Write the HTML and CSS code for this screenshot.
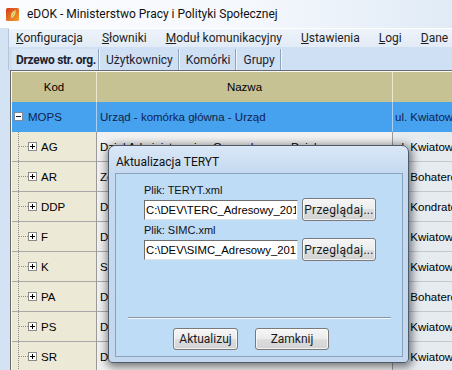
FILE: index.html
```html
<!DOCTYPE html>
<html lang="pl">
<head>
    <meta charset="UTF-8">
    <title>eDOK - Ministerstwo Pracy i Polityki Społecznej</title>
    <link rel="stylesheet" href="styles.css">
</head>
<body>
    <div class="titlebar">
        <svg class="app-icon" width="13" height="13" viewBox="0 0 13 13">
            <defs>
                <linearGradient id="iconGrad" x1="0" x2="1" y1="0" y2="1">
                    <stop offset="0" stop-color="#d53c1a"/>
                    <stop offset="1" stop-color="#f3a02c"/>
                </linearGradient>
            </defs>
            <rect width="13" height="13" rx="1.5" fill="url(#iconGrad)"/>
            <path d="M10 2.2 C6.4 2.8 4.2 5.8 5 10.4 C7.6 9.4 9.6 6.8 10 2.2 Z" fill="#f4e07e"/>
            <path d="M5 10.4 C6.2 7.6 7.6 5.4 10 2.2" stroke="#9bb84a" stroke-width="0.8" fill="none"/>
        </svg>
        <span class="title">eDOK - Ministerstwo Pracy i Polityki Społecznej</span>
    </div>

    <div class="frame">
        <div class="menubar">
            <span><u>K</u>onfiguracja</span>
            <span><u>S</u>łowniki</span>
            <span><u>M</u>oduł komunikacyjny</span>
            <span><u>U</u>stawienia</span>
            <span><u>L</u>ogi</span>
            <span><u>D</u>ane</span>
        </div>

        <div class="tabs">
            <div class="tab active">Drzewo str. org.</div>
            <div class="tab">Użytkownicy</div>
            <div class="tab">Komórki</div>
            <div class="tab">Grupy</div>
        </div>

        <div class="grid">
            <div class="row head">
                <div class="cell c1">Kod</div>
                <div class="cell c2">Nazwa</div>
                <div class="cell c3"></div>
            </div>
            <div class="row selected">
                <div class="cell c1 root">
                    <svg class="node" width="9" height="9" viewBox="0 0 9 9"><rect x=".5" y=".5" width="8" height="8" fill="#fff" stroke="#7d8a99"/><path d="M2 4.5h5" stroke="#0c1a3a"/></svg>
                    MOPS
                </div>
                <div class="cell c2">Urząd - komórka główna - Urząd</div>
                <div class="cell c3">ul. Kwiatowa 12</div>
            </div>
            <div class="row">
                <div class="cell c1"><span class="branch"></span><svg class="node" width="9" height="9" viewBox="0 0 9 9"><rect x=".5" y=".5" width="8" height="8" fill="#fff" stroke="#8a8a8a"/><path d="M2 4.5h5M4.5 2v5" stroke="#000"/></svg>AG</div>
                <div class="cell c2">Dział Administracyjno-Gospodarczy - Dział</div>
                <div class="cell c3">ul. Kwiatowa 12</div>
            </div>
            <div class="row">
                <div class="cell c1"><span class="branch"></span><svg class="node" width="9" height="9" viewBox="0 0 9 9"><rect x=".5" y=".5" width="8" height="8" fill="#fff" stroke="#8a8a8a"/><path d="M2 4.5h5M4.5 2v5" stroke="#000"/></svg>AR</div>
                <div class="cell c2">Zespół Radców Prawnych - Zespół</div>
                <div class="cell c3">ul. Bohaterów Warszawy 5</div>
            </div>
            <div class="row">
                <div class="cell c1"><span class="branch"></span><svg class="node" width="9" height="9" viewBox="0 0 9 9"><rect x=".5" y=".5" width="8" height="8" fill="#fff" stroke="#8a8a8a"/><path d="M2 4.5h5M4.5 2v5" stroke="#000"/></svg>DDP</div>
                <div class="cell c2">Dział Dodatków Pieniężnych - Dział</div>
                <div class="cell c3">ul. Kondratowicza 20</div>
            </div>
            <div class="row">
                <div class="cell c1"><span class="branch"></span><svg class="node" width="9" height="9" viewBox="0 0 9 9"><rect x=".5" y=".5" width="8" height="8" fill="#fff" stroke="#8a8a8a"/><path d="M2 4.5h5M4.5 2v5" stroke="#000"/></svg>F</div>
                <div class="cell c2">Dział Finansowo-Księgowy - Dział</div>
                <div class="cell c3">ul. Kwiatowa 12</div>
            </div>
            <div class="row">
                <div class="cell c1"><span class="branch"></span><svg class="node" width="9" height="9" viewBox="0 0 9 9"><rect x=".5" y=".5" width="8" height="8" fill="#fff" stroke="#8a8a8a"/><path d="M2 4.5h5M4.5 2v5" stroke="#000"/></svg>K</div>
                <div class="cell c2">Stanowisko ds. Kadr - Stanowisko</div>
                <div class="cell c3">ul. Kwiatowa 12</div>
            </div>
            <div class="row">
                <div class="cell c1"><span class="branch"></span><svg class="node" width="9" height="9" viewBox="0 0 9 9"><rect x=".5" y=".5" width="8" height="8" fill="#fff" stroke="#8a8a8a"/><path d="M2 4.5h5M4.5 2v5" stroke="#000"/></svg>PA</div>
                <div class="cell c2">Dział Pomocy Asystenckiej - Dział</div>
                <div class="cell c3">ul. Bohaterów Warszawy 5</div>
            </div>
            <div class="row">
                <div class="cell c1"><span class="branch"></span><svg class="node" width="9" height="9" viewBox="0 0 9 9"><rect x=".5" y=".5" width="8" height="8" fill="#fff" stroke="#8a8a8a"/><path d="M2 4.5h5M4.5 2v5" stroke="#000"/></svg>PS</div>
                <div class="cell c2">Dział Pracy Socjalnej - Dział</div>
                <div class="cell c3">ul. Kwiatowa 12</div>
            </div>
            <div class="row">
                <div class="cell c1"><span class="branch"></span><svg class="node" width="9" height="9" viewBox="0 0 9 9"><rect x=".5" y=".5" width="8" height="8" fill="#fff" stroke="#8a8a8a"/><path d="M2 4.5h5M4.5 2v5" stroke="#000"/></svg>SR</div>
                <div class="cell c2">Dział Świadczeń Rodzinnych - Dział</div>
                <div class="cell c3">ul. Kwiatowa 12</div>
            </div>
        </div>
    </div>

    <div class="dialog">
        <div class="dialog-title">Aktualizacja TERYT</div>
        <div class="dialog-client">
            <div class="fields">
                <div class="field-label">Plik: TERYT.xml</div>
                <div class="field-row">
                    <input class="path" type="text" value="C:\DEV\TERC_Adresowy_2018-01-02.xml" readonly>
                    <button class="btn browse">Przeglądaj...</button>
                </div>
                <div class="field-label">Plik: SIMC.xml</div>
                <div class="field-row">
                    <input class="path" type="text" value="C:\DEV\SIMC_Adresowy_2018-01-02.xml" readonly>
                    <button class="btn browse">Przeglądaj...</button>
                </div>
            </div>
            <div class="separator"></div>
            <div class="actions">
                <button class="btn update">Aktualizuj</button>
                <button class="btn close">Zamknij</button>
            </div>
        </div>
    </div>
</body>
</html>
```

FILE: styles.css
```css
* {
    box-sizing: border-box;
}
body {
    margin: 0;
    width: 452px;
    height: 370px;
    overflow: hidden;
    position: relative;
    background: #d4e3f3;
    font-family: Roboto, "Noto Sans", sans-serif;
    font-size: 12px;
    color: #1e1e1e;
}
.titlebar {
    height: 28px;
    display: flex;
    align-items: center;
    gap: 8px;
    padding-left: 6px;
    background: linear-gradient(to right, #fbfcfe 0%, #f5f8fc 55%, #e0ebf7 100%);
}
.app-icon {
    flex: none;
}
.title {
    color: #111;
}
.frame {
    padding-left: 8px;
}
.menubar {
    height: 19px;
    display: flex;
    align-items: center;
    gap: 19px;
    padding-left: 7px;
    background: linear-gradient(#eef3fa, #e2ebf6);
    border-top: 1px solid #ffffff;
    border-left: 1px solid #b6c6d9;
    white-space: nowrap;
}
.tabs {
    height: 23px;
    display: flex;
    align-items: flex-end;
    padding-left: 3px;
    background: #cfe0f4;
    border-left: 1px solid #b6c6d9;
}
.tab {
    height: 21px;
    line-height: 19px;
    padding: 2px 5px 0 7px;
    border-right: 1px solid #8ea4bd;
    box-shadow: 1px 0 0 #eef5fd;
    color: #1c2230;
    white-space: nowrap;
}
.tab.active {
    font-weight: 700;
    letter-spacing: -0.3px;
    padding: 2px 2px 0 4px;
    background: #d8e6f6;
}
.grid {
    margin-left: 2px;
    border-top: 1px solid #6b6b6b;
    border-left: 1px solid #6b6b6b;
    padding: 1px 0 0 1px;
    background: #f7f7f7;
    font-family: "Liberation Sans", Arial, sans-serif;
    font-size: 11.5px;
    color: #000;
}
.row {
    display: grid;
    grid-template-columns: 85px 296px 1fr;
    height: 30px;
}
.cell {
    display: flex;
    align-items: center;
    overflow: hidden;
    white-space: nowrap;
    border-right: 1px solid #9a9a9a;
    border-bottom: 1px solid #a8a8a8;
}
.c1 {
    background: #ece9d7;
}
.c2 {
    background: #f1f1f1;
    padding-left: 3px;
}
.c3 {
    background: #e6ebf0;
    padding-left: 2px;
    border-right: none;
    border-bottom-color: #c3c8cd;
}
.head .cell {
    background: #c7c294;
    justify-content: center;
    padding-left: 0;
    border-bottom: none;
    border-right-color: #ebe8d2;
}
.selected .cell {
    background: #46a1ef;
    color: #10234c;
    border-right-color: #a9d2f6;
    border-bottom-color: #46a1ef;
}
.root {
    padding-left: 2px;
    gap: 5px;
}
.branch {
    align-self: stretch;
    width: 10px;
    margin-left: 6px;
    border-left: 1px dotted #8c8c8c;
    display: flex;
    align-items: center;
}
.branch::after {
    content: "";
    width: 100%;
    border-top: 1px dotted #8c8c8c;
}
.node {
    flex: none;
    margin-right: 4px;
}
.root .node {
    margin-right: 0;
}

/* okno dialogowe */
.dialog {
    position: absolute;
    left: 108px;
    top: 145px;
    width: 301px;
    height: 218px;
    padding: 0 5px 5px 6px;
    border: 1px solid #4c5a69;
    border-radius: 7px 7px 4px 4px;
    background: linear-gradient(#dae8f7, #c5daf0 26px, #c3d8ee);
    box-shadow: 1px 2px 8px 2px rgba(0, 0, 0, 0.5);
}
.dialog-title {
    height: 27px;
    padding: 9px 0 0 1px;
    line-height: 14px;
    color: #111;
}
.dialog-client {
    height: 184px;
    border: 1px solid #8aa2bb;
    background: #bfdcf6;
}
.fields {
    padding: 9px 0 0 28px;
}
.field-label {
    height: 15px;
    line-height: 14px;
    font-family: "Liberation Sans", Arial, sans-serif;
    font-size: 11px;
    color: #111;
}
.field-row {
    display: flex;
    align-items: center;
    gap: 4px;
    height: 23px;
    margin-bottom: 2px;
}
.path {
    width: 154px;
    height: 20px;
    margin: 0;
    padding: 0 1px;
    border: 1px solid;
    border-color: #6e6e6e #e2e2e2 #e2e2e2 #6e6e6e;
    background: #fff;
    font-family: "Liberation Sans", Arial, sans-serif;
    font-size: 11.3px;
    color: #000;
    outline: none;
}
.btn {
    height: 23px;
    margin: 0;
    padding: 0;
    border: 1px solid #7a7a7a;
    border-radius: 3px;
    background: linear-gradient(#f5f5f5, #ececec 50%, #dedede 50%, #d2d2d2);
    box-shadow: inset 0 0 0 1px rgba(255, 255, 255, 0.7);
    font-family: Roboto, "Noto Sans", sans-serif;
    font-size: 12px;
    color: #1a1a1a;
}
.browse {
    width: 74px;
    letter-spacing: 0.3px;
}
.separator {
    height: 2px;
    margin: 56px 11px 0 12px;
    border-top: 1px solid #8797a8;
    border-bottom: 1px solid #f2f8fe;
}
.actions {
    display: flex;
    gap: 17px;
    padding: 9px 0 0 57px;
}
.update {
    width: 65px;
    height: 22px;
}
.close {
    width: 74px;
    height: 22px;
}
```
